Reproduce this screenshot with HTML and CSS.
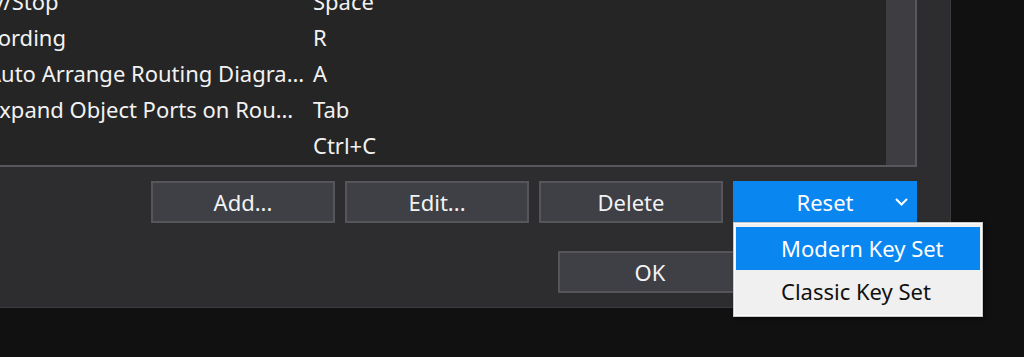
FILE: index.html
```html
<!DOCTYPE html>
<html lang="en">
<head>
    <meta charset="UTF-8">
    <meta name="viewport" content="width=device-width, initial-scale=1.0">
    <title>Keyboard Shortcuts</title>
    <link rel="stylesheet" href="styles.css">
</head>
<body>

    <div class="dialog">
        <div class="list">
            <div class="rows">
                <div class="row">
                    <span class="name">Play/Stop</span>
                    <span class="key">Space</span>
                </div>
                <div class="row">
                    <span class="name">Recording</span>
                    <span class="key">R</span>
                </div>
                <div class="row">
                    <span class="name child">Auto Arrange Routing Diagra…</span>
                    <span class="key">A</span>
                </div>
                <div class="row">
                    <span class="name child">Expand Object Ports on Rou…</span>
                    <span class="key">Tab</span>
                </div>
                <div class="row">
                    <span class="name"></span>
                    <span class="key">Ctrl+C</span>
                </div>
            </div>
            <div class="scrollbar"></div>
        </div>

        <div class="button-row">
            <button class="btn">Add...</button>
            <button class="btn">Edit...</button>
            <button class="btn">Delete</button>
            <div class="split">
                <button class="btn btn-accent">Reset</button>
                <svg class="chevron" width="13" height="8" viewBox="0 0 13 8">
                    <path d="M1 1 L6.5 6.5 L12 1" fill="none" stroke="#ffffff" stroke-width="2"/>
                </svg>
                <div class="menu">
                    <div class="menu-item active">Modern Key Set</div>
                    <div class="menu-item">Classic Key Set</div>
                </div>
            </div>
        </div>

        <div class="footer-row">
            <button class="btn">OK</button>
        </div>
    </div>

</body>
</html>
```

FILE: styles.css
```css
html {
    height: 100%;
    background-color: #111111;
}
body {
    margin: 0;
    height: 100%;
    background-color: #111111;
    font-family: "Noto Sans", "Open Sans", sans-serif;
    font-size: 22px;
    color: #f2f2f2;
}
.dialog {
    display: flow-root;
    width: 950px;
    background-color: #2d2d30;
    border-right: 1px solid #3a3a3d;
    border-bottom: 1px solid #3a3a3d;
    padding-bottom: 14px;
}
.list {
    display: flex;
    margin-top: -17px;
    margin-left: -60px;
    width: 975px;
    border-right: 2px solid #58585c;
    border-bottom: 2px solid #58585c;
}
.rows {
    flex: 1;
    background-color: #252526;
    padding-bottom: 2px;
}
.row {
    display: flex;
    height: 36px;
    line-height: 36px;
    white-space: nowrap;
}
.name {
    width: 352px;
    padding-left: 21px;
    overflow: hidden;
}
.name.child {
    width: 326px;
    padding-left: 47px;
}
.key {
    flex: 1;
}
.scrollbar {
    width: 29px;
    background-color: #3e3d42;
}
.button-row {
    display: flex;
    justify-content: flex-end;
    gap: 10px;
    margin-top: 14px;
    padding-right: 33px;
}
.footer-row {
    display: flex;
    justify-content: flex-end;
    gap: 10px;
    margin-top: 28px;
    padding-right: 208px;
}
.btn {
    width: 184px;
    height: 42px;
    box-sizing: border-box;
    background-color: #3f3f46;
    border: 2px solid #55555a;
    color: #f2f2f2;
    font-family: inherit;
    font-size: 22px;
    padding: 0;
}
.split {
    position: relative;
}
.btn-accent {
    display: block;
    background-color: #0a86f0;
    border-color: #0a86f0;
    color: #ffffff;
}
.chevron {
    position: absolute;
    right: 9px;
    top: 17px;
}
.menu {
    position: absolute;
    left: 0;
    top: 41px;
    width: 250px;
    box-sizing: border-box;
    background-color: #f0f0f0;
    border: 1px solid #c8c8c8;
    box-shadow: inset 0 0 0 1px #fbfbfb, 2px 2px 4px rgba(0, 0, 0, 0.4);
    padding: 4px 2px 3px;
    z-index: 10;
}
.menu-item {
    height: 43px;
    line-height: 43px;
    padding-left: 45px;
    color: #111111;
}
.menu-item.active {
    background-color: #0a86f0;
    color: #ffffff;
}
```
